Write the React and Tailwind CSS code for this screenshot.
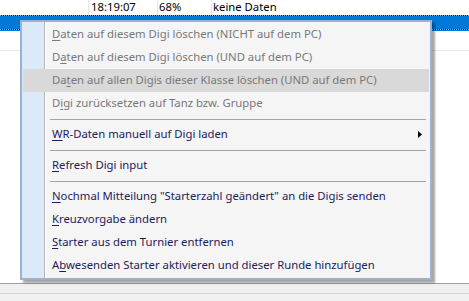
import React from "react";

const items = [
  { pre: "", acc: "D", post: "aten auf diesem Digi löschen (NICHT auf dem PC)", disabled: true },
  { pre: "D", acc: "a", post: "ten auf diesem Digi löschen (UND auf dem PC)", disabled: true },
  { pre: "Da", acc: "t", post: "en auf allen Digis dieser Klasse löschen (UND auf dem PC)", disabled: true, active: true },
  { pre: "D", acc: "i", post: "gi zurücksetzen auf Tanz bzw. Gruppe", disabled: true },
  { sep: true },
  { pre: "", acc: "W", post: "R-Daten manuell auf Digi laden", submenu: true },
  { sep: true },
  { pre: "", acc: "R", post: "efresh Digi input" },
  { sep: true },
  { pre: "", acc: "N", post: "ochmal Mitteilung \"Starterzahl geändert\" an die Digis senden" },
  { pre: "", acc: "K", post: "reuzvorgabe ändern" },
  { pre: "", acc: "S", post: "tarter aus dem Turnier entfernen" },
  { pre: "A", acc: "b", post: "wesenden Starter aktivieren und dieser Runde hinzufügen" },
];

function MenuItem({ item }) {
  if (item.sep) {
    return (
      <div className="h-[8px] flex items-center pl-[27px] pr-[3px]">
        <div className="h-px w-full bg-[#a5a5a5]" />
      </div>
    );
  }
  return (
    <div
      className={`h-[23px] flex items-center justify-between pl-[29px] pr-[7px] ${
        item.active ? "bg-[#d9d9d9]" : ""
      } ${item.disabled ? "text-[#787878]" : "text-[#1c1c5e]"}`}
    >
      <span className="whitespace-nowrap">
        {item.pre}
        <span className="underline underline-offset-2">{item.acc}</span>
        {item.post}
      </span>
      {item.submenu && (
        <svg width="4" height="7" viewBox="0 0 4 7">
          <path d="M0 0 L4 3.5 L0 7 Z" fill="#000" />
        </svg>
      )}
    </div>
  );
}

export default function App() {
  return (
    <div
      className="relative w-[469px] h-[301px] overflow-hidden bg-white text-[11.3px] text-black"
      style={{ fontFamily: '"Noto Sans", "Segoe UI", sans-serif' }}
    >
      {/* Tabelle im Hintergrund */}
      <div className="flex flex-col h-full">
        <div className="h-[15px] flex leading-[14px]">
          <div className="w-[89px] border-r border-[#e6e6e6]" />
          <div className="w-[69px] border-r border-[#e6e6e6] pl-[2px]">18:19:07</div>
          <div className="w-[54px] border-r border-[#e6e6e6] pl-[1px]">68%</div>
          <div className="flex-1 pl-[1px]">keine Daten</div>
        </div>
        <div className="h-[16px] bg-[#0078d7] flex flex-col justify-between">
          <div className="h-px bg-[repeating-linear-gradient(90deg,#ff9a3c_0_1px,#000_1px_2px)]" />
          <div className="h-px mb-[1px] bg-[repeating-linear-gradient(90deg,#ff9a3c_0_1px,#000_1px_2px)]" />
        </div>
        <div className="h-[20px] border-b border-[#e8e8e8]" />
        <div className="flex-1" />
        <div className="h-[10px] bg-[#f0f0f0] border-t border-[#a0a0a0]" />
        <div className="h-[8px] bg-[#f0f0f0] border-t border-[#d4d4d4]" />
      </div>

      {/* Kontextmenü */}
      <div className="absolute left-[20px] top-[20px] w-[412px] h-[260px] border-2 border-[#9cb1ce] shadow-[3px_3px_2px_rgba(0,0,0,0.35)] p-px bg-[linear-gradient(90deg,#dbe9f9_0_22px,#b4b4b4_22px_23px,#ffffff_23px_24px,#f5f5f5_24px)]">
        {items.map((item, i) => (
          <MenuItem key={i} item={item} />
        ))}
      </div>
    </div>
  );
}
